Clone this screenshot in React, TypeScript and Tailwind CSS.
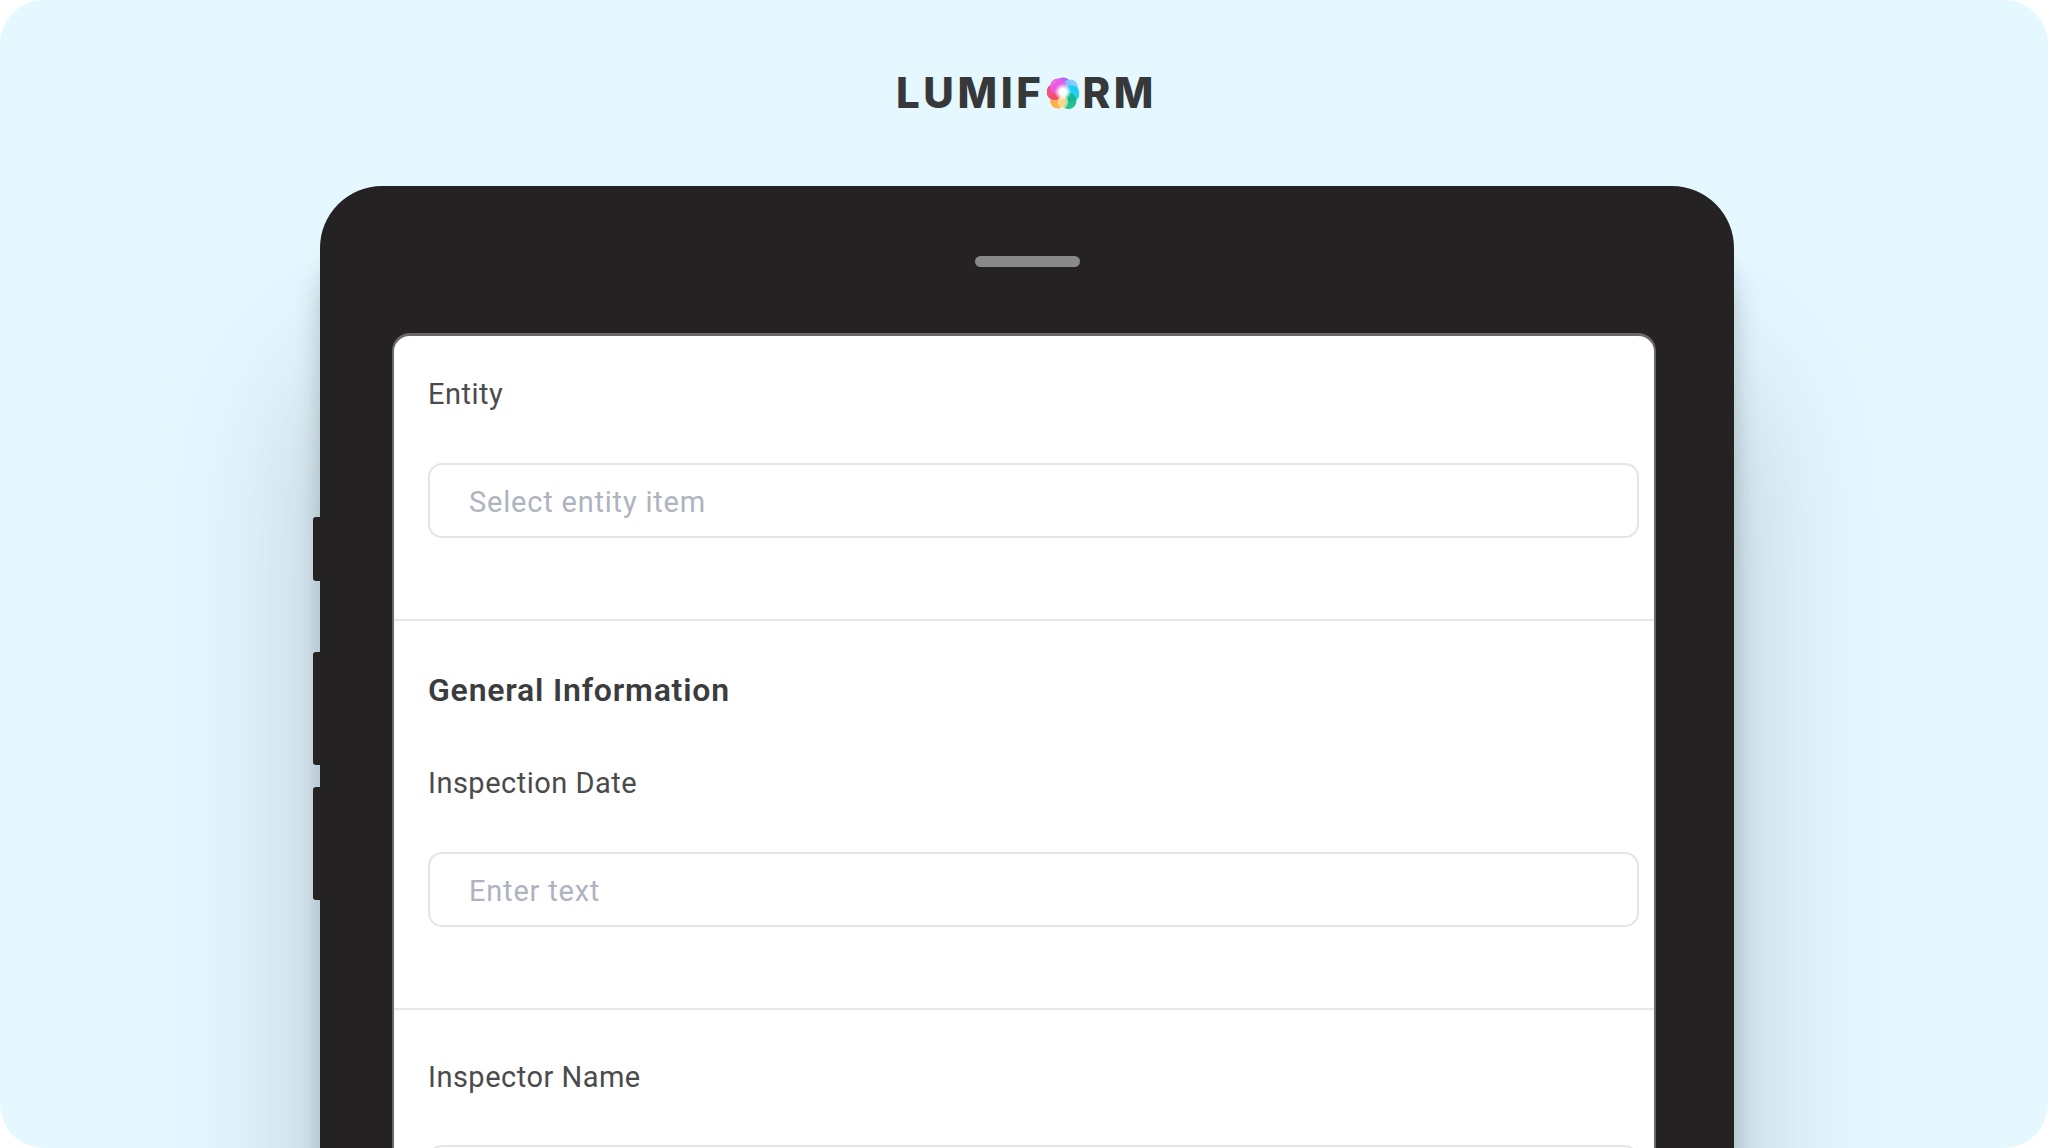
const fieldFont = "font-['Roboto',sans-serif]";

function LogoMark() {
  const petals = [
    { cx: 16, cy: 9.5, fill: "#a855f7" },
    { cx: 23, cy: 11.5, fill: "#7cc8fb" },
    { cx: 24.5, cy: 17.5, fill: "#12cdf2" },
    { cx: 21.5, cy: 25, fill: "#10b981" },
    { cx: 11, cy: 24.5, fill: "#fdab3d" },
    { cx: 7.5, cy: 16, fill: "#f43f6e" },
    { cx: 11, cy: 10.5, fill: "#e95be8" },
  ];
  return (
    <svg width="32" height="34" viewBox="0 0 32 34" className="mx-[3px]">
      <defs>
        <radialGradient id="logoCenter">
          <stop offset="0.4" stopColor="#ffffff" />
          <stop offset="1" stopColor="#ffffff" stopOpacity="0" />
        </radialGradient>
      </defs>
      {petals.map((p) => (
        <circle key={p.fill} cx={p.cx} cy={p.cy} r="8" fill={p.fill} fillOpacity="0.9" />
      ))}
      <ellipse cx="16" cy="26" rx="5" ry="6.5" fill="#fdeeb5" fillOpacity="0.65" />
      <circle cx="16" cy="16" r="8.5" fill="url(#logoCenter)" />
    </svg>
  );
}

function Logo() {
  const letterClass = "font-['Inter',sans-serif] text-[42px] leading-none font-extrabold text-[#363839]";
  return (
    <div className="flex h-[186px] items-start justify-center pt-[72px] pl-[5px]">
      <div className="flex items-center tracking-[3.6px]">
        <span className={letterClass}>LUMIF</span>
        <LogoMark />
        <span className={letterClass}>RM</span>
      </div>
    </div>
  );
}

function TextField({ placeholder }: { placeholder?: string }) {
  return (
    <div className="flex h-[75px] w-[1211px] items-center rounded-[14px] border-2 border-[#e3e5e7] bg-white pl-[39px]">
      {placeholder && (
        <span className={`${fieldFont} mt-[4px] text-[29px] tracking-[0.8px] text-[#aeb3bf]`}>{placeholder}</span>
      )}
    </div>
  );
}

function Label({ children }: { children: string }) {
  return <p className={`${fieldFont} text-[29px] leading-[34px] tracking-[0.5px] text-[#4a4b4d]`}>{children}</p>;
}

export default function App() {
  return (
    <div className="h-[1148px] w-full overflow-hidden bg-white">
      <div className="h-[1148px] overflow-hidden rounded-[44px] bg-[#e5f7ff]">
        <Logo />

        {/* tablet */}
        <div className="relative ml-[320px] h-[1300px] w-[1414px] rounded-t-[62px] bg-[#242222] px-[72px] pt-[147px] shadow-[0_190px_160px_rgba(60,75,85,0.28),0_60px_24px_rgba(50,65,75,0.28)]">
          <div className="absolute top-[70px] left-[655px] h-[11px] w-[105px] rounded-full bg-[#8b8a8a]" />
          <div className="absolute top-[331px] -left-[7px] h-[64px] w-[7px] rounded-l-[3px] bg-[#242222]" />
          <div className="absolute top-[466px] -left-[7px] h-[113px] w-[7px] rounded-l-[3px] bg-[#242222]" />
          <div className="absolute top-[601px] -left-[7px] h-[113px] w-[7px] rounded-l-[3px] bg-[#242222]" />

          <div className="h-[1200px] w-[1264px] rounded-t-[18px] border-x-2 border-t-[3px] border-[#6d6767] bg-white">
            <section className="h-[285px] border-b-2 border-[#e6e7e8] pt-[41px] pl-[34px]">
              <Label>Entity</Label>
              <div className="mt-[52px]">
                <TextField placeholder="Select entity item" />
              </div>
            </section>

            <section className="h-[389px] border-b-2 border-[#e6e7e8] pt-[50px] pl-[34px]">
              <h2 className={`${fieldFont} text-[32px] leading-[38px] font-semibold tracking-[0.8px] text-[#3b3c3e]`}>
                General Information
              </h2>
              <div className="mt-[57px]">
                <Label>Inspection Date</Label>
              </div>
              <div className="mt-[52px]">
                <TextField placeholder="Enter text" />
              </div>
            </section>

            <section className="pt-[50px] pl-[34px]">
              <Label>Inspector Name</Label>
              <div className="mt-[51px]">
                <TextField />
              </div>
            </section>
          </div>
        </div>
      </div>
    </div>
  );
}
